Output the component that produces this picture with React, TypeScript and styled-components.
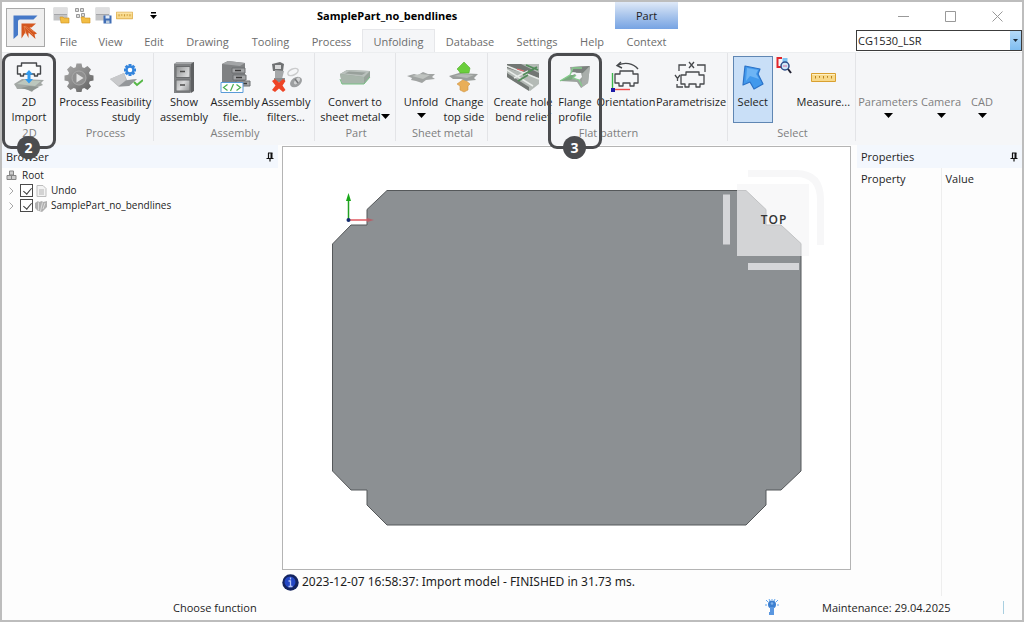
import React from "react";
import styled, { createGlobalStyle, css } from "styled-components";

const GlobalStyle = createGlobalStyle`
  * { box-sizing: border-box; }
  body {
    margin: 0;
    background: #fdfdfd;
    color: #1e1e1e;
    font: 11px/15px "Open Sans", "Noto Sans", sans-serif;
  }
  button, select, input { font: inherit; color: inherit; margin: 0; }
`;

const Frame = styled.div`
  min-height: 100vh;
  display: flex;
  flex-direction: column;
  border: 2px solid #bdbdbd;
  background: #fdfdfd;
`;

/* ---------- header ---------- */

const Header = styled.header`
  display: flex;
  background: #fff;
`;

const LogoButton = styled.button`
  width: 39px;
  height: 39px;
  margin: 6px 4px 5px;
  padding: 0;
  border: 1px solid #a9a9a9;
  background: #efefef;
  display: flex;
  align-items: center;
  justify-content: center;
`;

const HeaderMain = styled.div`
  display: flex;
  flex-direction: column;
`;

const TitleRow = styled.div`
  height: 27px;
  display: flex;
  align-items: center;
`;

const QuickAccess = styled.div`
  display: flex;
  gap: 4px;
  width: 268px;
  padding-left: 4px;
`;

const QuickButton = styled.button`
  width: 17px;
  height: 18px;
  padding: 0;
  border: 0;
  background: none;
  display: flex;
  align-items: center;
  justify-content: center;
`;

const QuickMenu = styled(QuickButton)`
  margin-left: 8px;
`;

const Title = styled.h1`
  flex: 1;
  margin: 0;
  font-size: 11px;
  line-height: 15px;
  font-weight: 700;
  color: #000;
`;

const ContextTab = styled.div`
  width: 63px;
  align-self: stretch;
  display: flex;
  align-items: center;
  justify-content: center;
  background: linear-gradient(#dfe9f8, #a9c5ec 50%, #76a3e3);
`;

const Tabs = styled.nav`
  height: 23px;
  display: flex;
`;

const Tab = styled.button<{ $w: number; $active?: boolean }>`
  width: ${(p) => p.$w}px;
  padding: 0;
  border: 1px solid ${(p) => (p.$active ? "#e6e7ea" : "transparent")};
  border-bottom: 0;
  background: ${(p) => (p.$active ? "#f5f6f8" : "none")};
  color: #6c6c6c;
  white-space: nowrap;
`;

const HeaderSide = styled.div`
  flex: 1;
  display: flex;
  flex-direction: column;
  align-items: flex-end;
`;

const WindowControls = styled.div`
  display: flex;
  height: 28px;
  padding-right: 1px;
`;

const WindowButton = styled.button`
  width: 47px;
  padding: 0;
  border: 0;
  background: none;
  display: flex;
  align-items: center;
  justify-content: center;
`;

const MachineBox = styled.div`
  position: relative;
  width: 166px;
  height: 21px;
`;

const MachineSelect = styled.select`
  appearance: none;
  width: 100%;
  height: 100%;
  padding: 0 14px 0 1px;
  border: 1px solid #3c3c3c;
  border-radius: 0;
  background: #fff;
`;

const MachineArrow = styled.span`
  position: absolute;
  top: 1px;
  right: 1px;
  bottom: 1px;
  width: 11px;
  display: flex;
  align-items: center;
  justify-content: center;
  background: linear-gradient(#b5daf7, #7fbdf0);
  pointer-events: none;
`;

/* ---------- ribbon ---------- */

const Ribbon = styled.div`
  height: 93px;
  display: flex;
  background: #f5f6f8;
  border-top: 1px solid #eceef0;
`;

const GroupBox = styled.section<{ $w?: number }>`
  ${(p) => (p.$w ? css`width: ${p.$w}px;` : css`flex: 1;`)}
  height: 88px;
  padding: 3px 0 0 2px;
  display: flex;
  flex-direction: column;
  border-right: 1px solid ${(p) => (p.$w && p.$w > 54 ? "#e3e4e7" : "transparent")};
`;

const GroupButtons = styled.div`
  height: 68px;
  display: flex;
  align-items: flex-start;
`;

const GroupLabel = styled.div`
  margin-top: 1px;
  text-align: center;
  color: #7e7e7e;
`;

const ButtonHolder = styled.div<{ $w: number }>`
  position: relative;
  width: ${(p) => p.$w}px;
  display: flex;
  justify-content: center;
`;

const ToolButton = styled.button<{ $selected?: boolean; $dim?: boolean }>`
  width: ${(p) => (p.$selected ? "40px" : "100%")};
  height: 67px;
  padding: 3px 0 0;
  border: 1px solid ${(p) => (p.$selected ? "#5f86b3" : "transparent")};
  background: ${(p) => (p.$selected ? "#c9dff7" : "none")};
  color: ${(p) => (p.$dim ? "#7e7e7e" : "#1e1e1e")};
  display: flex;
  flex-direction: column;
  align-items: center;
  text-align: center;
  white-space: pre;
`;

const IconSlot = styled.span`
  flex: none;
  height: 34px;
  display: flex;
  align-items: center;
`;

const MiniButton = styled.button`
  width: 16px;
  height: 20px;
  padding: 0;
  border: 0;
  background: none;
`;

const LabelLine = styled.span`
  display: flex;
  align-items: center;
`;

const Highlight = styled.span`
  position: absolute;
  z-index: 2;
  top: -3px;
  left: calc(50% - 27px);
  width: 54px;
  height: 96px;
  border: 3px solid #4b4c4f;
  border-radius: 9px;
  pointer-events: none;
`;

const Badge = styled.span`
  position: absolute;
  left: 12px;
  bottom: -13px;
  width: 23px;
  height: 23px;
  border-radius: 50%;
  background: #4b4c4f;
  color: #fff;
  font-size: 14px;
  font-weight: 700;
  line-height: 23px;
  text-align: center;
`;

/* ---------- body ---------- */

const Body = styled.div`
  flex: 1;
  display: flex;
`;

const BrowserPanel = styled.aside`
  width: 280px;
  padding-right: 4px;
`;

const PanelHeader = styled.div`
  height: 23px;
  padding: 0 4px;
  display: flex;
  align-items: center;
  justify-content: space-between;
  background: #f3f7fd;
`;

const PinButton = styled.button`
  width: 8px;
  height: 10px;
  padding: 0;
  border: 0;
  background: none;
  display: flex;
`;

const Tree = styled.ul`
  margin: 0;
  padding: 0 0 0 4px;
  list-style: none;
  font-size: 10px;
`;

const TreeRow = styled.li`
  height: 15px;
  display: flex;
  align-items: center;
`;

const RootName = styled.span`
  margin-left: 5px;
`;

const TreeLabel = styled.label`
  display: flex;
  align-items: center;
  gap: 1px;
`;

const TreeIcon = styled.span`
  width: 14px;
  display: flex;
  justify-content: center;
`;

const TreeName = styled.span`
  margin-left: 2px;
`;

const Expander = styled.button`
  width: 14px;
  height: 13px;
  padding: 0 0 0 3px;
  border: 0;
  background: none;
  display: flex;
  align-items: center;
`;

const Check = styled.input`
  appearance: none;
  position: relative;
  width: 13px;
  height: 13px;
  border: 1px solid #4a4a4a;
  background: #fff;
  &:checked::after {
    content: "";
    position: absolute;
    left: 4px;
    top: 1px;
    width: 4px;
    height: 7px;
    border: solid #3a3a3a;
    border-width: 0 1px 1px 0;
    transform: rotate(40deg);
  }
`;

const Center = styled.main`
  flex: 1;
  min-width: 0;
  padding-top: 1px;
  display: flex;
  flex-direction: column;
`;

const Viewport = styled.div`
  flex: 1;
  min-height: 0;
  display: flex;
  border: 1px solid #b4b4b4;
  background: #fff;
  svg { flex: 1; min-width: 0; }
`;

const LogLine = styled.div`
  height: 26px;
  padding-bottom: 2px;
  display: flex;
  align-items: center;
  gap: 3px;
  font: 12px/16px "Noto Sans", sans-serif;
`;

const PropertiesPanel = styled.aside`
  width: 171px;
  padding-left: 6px;
  display: flex;
  flex-direction: column;
`;

const PropertyTable = styled.table`
  flex: 1;
  width: 100%;
  height: 100%;
  border-collapse: collapse;
  th {
    height: 20px;
    padding: 0 0 0 4px;
    font-weight: 400;
    text-align: left;
  }
  td { padding: 0; }
  th:first-child { width: 84px; }
  th:first-child, td:first-child { border-right: 1px solid #eeeeee; }
`;

const StatusBar = styled.footer`
  height: 24px;
  padding: 0 18px 2px 171px;
  display: flex;
  align-items: center;
`;

const StatusHint = styled.span`
  flex: 1;
`;

const Maintenance = styled.span`
  width: 181px;
  margin-left: 43px;
`;

const StatusTick = styled.span`
  width: 1px;
  height: 13px;
  background: #a9cfe0;
`;

/* ---------- icons ---------- */

const Caret = () => (
  <svg width="9" height="5" viewBox="0 0 9 5"><path d="M0 0h9L4.5 5z" fill="#000" /></svg>
);

const Pin = () => (
  <svg width="8" height="10" viewBox="0 0 8 10">
    <path d="M2.500 1v5M2 1h4.500M.5 6.500h7M4 6.500v3" stroke="#111" strokeWidth="1.200" fill="none" />
    <path d="M4.500 1h2v5.400h-2z" fill="#111" />
  </svg>
);

const Logo = () => (
  <svg width="25" height="25" viewBox="0 0 25 25">
    <path d="M.5.5h24l-4 4H7Q5 4.500 5 6.500V20l-4.500 4z" fill="#4679c8" />
    <path d="M8.500 8.500H23l-4.500 4h-2l7.500 6-2.500 1 1 4.500-7-6.500v5.500l-3.500-7V18l-3.500 5.500z" fill="#d4571f" />
    <path d="M11 11l9 9M11 11l2 8M12 11l9 6" stroke="#e98a55" strokeWidth=".7" fill="none" />
  </svg>
);

const FolderBits = () => (
  <path d="M7 10h3l1 1h5v5H8z" fill="#f2bd44" stroke="#cf9220" strokeWidth=".6" />
);

const OpenIcon = () => (
  <svg width="17" height="17" viewBox="0 0 17 17">
    <path d="M.5.5h14v13H.5z" fill="#c3c4c6" /><path d="M1 1h13v6H1z" fill="#dededf" />
    <path d="M1 7.500h13" stroke="#a5a6a9" /><FolderBits />
  </svg>
);

const ImportAsmIcon = () => (
  <svg width="17" height="17" viewBox="0 0 17 17">
    <path d="M1.500 1.500h3v3h-3zM6.500 1.500h3v3h-3zM2.500 7.500h3v3h-3zM7.500 6.500h3v3h-3z" fill="#ddd" stroke="#9a9a9a" /><FolderBits />
  </svg>
);

const SaveIcon = () => (
  <svg width="17" height="17" viewBox="0 0 17 17">
    <path d="M.5.5h14v13H.5z" fill="#c3c4c6" /><path d="M1 1h13v6H1z" fill="#dededf" />
    <path d="M1 7.500h13" stroke="#a5a6a9" />
    <path d="M8.500 8.500h8v8h-8z" fill="#3f6db5" /><path d="M10.500 8.500h4v3h-4z" fill="#dfe9f6" /><path d="M11 13.500h3.500v3H11z" fill="#bcd" />
  </svg>
);

const Ruler = ({ w, h }: { w: number; h: number }) => (
  <svg width={w} height={h} viewBox="0 0 25 11" preserveAspectRatio="none">
    <path d="M.5 1.500h24v8H.5z" fill="#f8d98a" stroke="#d9a030" />
    <path d="M1 2.500h23" stroke="#fdf0c4" />
    <path d="M4.500 4v2.500M8.500 4v1.800M12.500 4v2.500M16.500 4v1.800M20.500 4v2.500" stroke="#b98420" />
  </svg>
);

const Import2DIcon = () => (
  <svg width="32" height="34" viewBox="0 0 32 34">
    <path d="M1 24l8-5 22 1-3 3 2 2-8 3-3 4-6-3-9 0-1-2z" fill="#a3a8a5" />
    <path d="M4 24l7-4 17 1-6 5z" fill="#bcc7be" /><path d="M8 28l8-2 10 1-7 4z" fill="#8d9490" />
    <path d="M4.500 6h4V3h15v3h4v8h-3v2h-3v-2h-11v2h-3v-2h-3z" fill="#fafbfb" stroke="#45484b" strokeWidth="1.400" strokeLinejoin="round" />
    <path d="M16 10l4 4.500h-2.500V19H20l-4 4.500-4-4.500h2.500v-4.500H12z" fill="#2f9bf0" />
  </svg>
);

const gearTeeth = [0, 45, 90, 135, 180, 225, 270, 315];

const ProcessIcon = () => (
  <svg width="30" height="32" viewBox="0 0 30 32">
    <defs>
      <linearGradient id="gear" x1="0" y1="0" x2="1" y2="1">
        <stop offset="0" stopColor="#a9a9a9" /><stop offset=".5" stopColor="#8a8a8a" /><stop offset="1" stopColor="#5c5c5c" />
      </linearGradient>
    </defs>
    <path
      d="M12.500 2.500h5l.8 3.700 2 .9L23.500 5l3.500 3.500-2 3.200.8 2 3.700.8v5l-3.700.8-.8 2 2 3.200-3.500 3.500-3.200-2-2 .8-.8 3.200h-5l-.8-3.200-2-.8-3.200 2L3 25.500l2-3.200-.8-2-3.700-.8v-5l3.700-.8.8-2-2-3.200L6.500 5l3.200 2.100 2-.9z"
      fill="url(#gear)"
    />
    <circle cx="15" cy="17" r="7" fill="#8f8f8f" stroke="#a8a8a8" />
    <path d="M12.500 12.500l7 4.500-7 4.500z" fill="#e4e4e4" />
  </svg>
);

const FeasibilityIcon = () => (
  <svg width="34" height="32" viewBox="0 0 34 32">
    <path d="M1 18l14-6 3 7 10-1-8 7-10 1z" fill="#b3b5b7" />
    <path d="M1 18l14-6 2 7-7 6z" fill="#c8c9cb" /><path d="M10 25l7-5.500 11-1.500-8 7z" fill="#94979a" />
    <g fill="#3485dd">
      {gearTeeth.map((a) => (
        <path key={a} d="M19.500 3h3v3h-3z" transform={`rotate(${a} 21 9)`} />
      ))}
    </g>
    <circle cx="21" cy="9" r="3.400" fill="#fff" stroke="#3485dd" strokeWidth="2.200" />
    <path d="M25 21l3 3 6-5" fill="none" stroke="#56b847" strokeWidth="2" />
  </svg>
);

const CabinetIcon = () => (
  <svg width="24" height="32" viewBox="0 0 24 32">
    <defs>
      <linearGradient id="drawer" x1="0" y1="0" x2="1" y2="1">
        <stop offset="0" stopColor="#8f9192" /><stop offset=".6" stopColor="#d9dadb" /><stop offset="1" stopColor="#909293" />
      </linearGradient>
    </defs>
    <path d="M2 3l3-2h17l-1 29-3 2H2z" fill="#808284" />
    <path d="M2 3l3-2h17l-3 2z" fill="#a5a7a9" /><path d="M19 3l3-2v29l-3 2z" fill="#5e6062" />
    <path d="M4 5.500h14v11H4zM4 19h14v11H4z" fill="url(#drawer)" stroke="#6a6c6e" />
    <path d="M8 10.500h5M8 24h5" stroke="#4c4c4c" strokeWidth="1.600" />
  </svg>
);

const AsmFileIcon = () => (
  <svg width="34" height="34" viewBox="0 0 34 34">
    <path d="M4 4l6-3 17 2v20H4z" fill="#7f8183" /><path d="M4 4l6-3 17 2-5 3z" fill="#a3a5a7" />
    <path d="M14 8h13v5H14zM15 15h13v5H15zM18 21h14v5H18z" fill="#a3a5a7" stroke="#6c6e70" />
    <path d="M17 10.500h6M18 17.500h6M24 23.500h5" stroke="#3a3a3a" strokeWidth="1.500" />
    <path d="M3 22.500h22v10H3z" fill="#fff" stroke="#5a9bd8" />
    <path d="M9.500 24.500l-4 3 4 3M18.500 24.500l4 3-4 3M15.500 24l-3 7" stroke="#4caf50" fill="none" strokeWidth="1.200" />
  </svg>
);

const FiltersIcon = () => (
  <svg width="32" height="34" viewBox="0 0 32 34">
    <path d="M2 4l8-2 4 2-1 7H3z" fill="#707274" /><path d="M5 10l9 1-2 8H5z" fill="#a5a8aa" /><path d="M5 5h6v4H5z" fill="#d9dadb" />
    <path d="M4 18h11v4H4z" fill="#8a8c8e" />
    <ellipse cx="23" cy="12" rx="5.500" ry="3" fill="none" stroke="#cbcccd" strokeWidth="1.500" transform="rotate(-25 23 12)" />
    <ellipse cx="26" cy="22" rx="6.500" ry="4.500" fill="#9d9fa1" transform="rotate(-35 26 22)" />
    <ellipse cx="27" cy="21" rx="4" ry="2" fill="#d2d3d4" transform="rotate(-50 27 21)" />
    <path d="M25 19l3 4" stroke="#77797b" strokeWidth="1.500" />
    <path d="M2 21l3-2 4 3.500 4-3.500 2.500 2-3 4.500 3 4.500-2.500 2-4-3.500-4 3.500-3-2 3.500-4.500z" fill="#ee4526" />
  </svg>
);

const ConvertIcon = () => (
  <svg width="32" height="18" viewBox="0 0 32 18">
    <path d="M1 6l7-4 23 1v6l-6 7H3z" fill="#97a39a" />
    <path d="M1 6l7-4 23 1-6 6z" fill="#b9c0bc" /><path d="M6 5.500l4-2 17 1-4 2.500z" fill="#98a09b" />
    <path d="M1 6l24 3v7H3z" fill="#a8b5ab" /><path d="M1 11l2 5h22l6-7" stroke="#7ac086" fill="none" />
  </svg>
);

const UnfoldIcon = () => (
  <svg width="30" height="20" viewBox="0 0 30 20">
    <path d="M1 9l7-2 4 1 5-3 5 2 7 0-3 3 3 2-9 1-4 3-6-2-5-1 1-2z" fill="#a1a4a3" />
    <path d="M6 9l8-2 10 1-7 4z" fill="#bfc3c0" />
  </svg>
);

const ChangeTopIcon = () => (
  <svg width="32" height="32" viewBox="0 0 32 32">
    <path d="M16 18l6 5-2 2v4l-4 2-4-2v-4l-3-2z" fill="#e9ae58" stroke="#cf9644" strokeWidth=".6" />
    <path d="M1 15l10-3 19 1-4 4 2 2-10 1-5-2-8 0z" fill="#9a9e9c" />
    <path d="M6 15l7-2 13 1-7 3z" fill="#b5bab6" />
    <path d="M16 1l6 6-1 5h-9l-1-2-2-2z" fill="#6ace3c" stroke="#50ad2c" strokeWidth=".6" strokeLinejoin="round" />
  </svg>
);

const ReliefIcon = () => (
  <svg width="34" height="30" viewBox="0 0 34 30">
    <path d="M1 2h32v20l-9 7L1 15z" fill="#b4bab6" />
    <path d="M1 2h14l18 9v5L1 6zM1 11l22 14v4L1 15z" fill="#727774" />
    <path d="M1 4l32 13M1 8l26 16M8 16l14-7" stroke="#e8ece9" strokeWidth="1.500" fill="none" />
    <path d="M17 13l14-8M20 3l12 5M12 19l10-6" stroke="#528c5a" strokeWidth="1.800" fill="none" />
    <path d="M11 7l7 2" stroke="#e5686b" strokeWidth="1.300" />
  </svg>
);

const FlangeIcon = () => (
  <svg width="32" height="26" viewBox="0 0 32 26">
    <path d="M11 3l20-1-2 17-7 5-4-6-17-1 10-6h3l7-6-9 4z" fill="#9da39f" />
    <path d="M14 3l17-1-7 7-11-1z" fill="#7b817e" />
    <path d="M24 9l7-7-2 17-7 5z" fill="#a9aeab" /><path d="M1 17l10-6h6l-5 5z" fill="#7aa97f" />
    <path d="M14 9l8 0 1 4-3 3-6-2 3-3z" fill="#f5f6f8" />
    <path d="M1 17l10-6 3-7h9M17 11l-3 3 6 2 3 6" stroke="#86cd8d" fill="none" strokeWidth="1.300" />
  </svg>
);

const profile = "M5 14h5v-3h13v3h5v9h-4v3h-4v-3h-7v3H9v-3H5z";

const OrientationIcon = () => (
  <svg width="32" height="34" viewBox="0 0 32 34">
    <path d={profile} fill="none" stroke="#45484b" strokeWidth="1.300" strokeLinejoin="round" />
    <path d="M28 9C23 3 15 2 8 5M11 2L7 5.500l5 2.500" fill="none" stroke="#45484b" strokeWidth="1.400" />
    <path d="M2.500 13v16" stroke="#39b54a" strokeWidth="1.400" /><path d="M3 29.500h17" stroke="#f04a4a" strokeWidth="1.400" />
    <path d="M1 28h4v4H1z" fill="#1c1ca8" />
  </svg>
);

const ParamIcon = () => (
  <svg width="34" height="34" viewBox="0 0 34 34">
    <path d={profile} transform="translate(2 1)" fill="none" stroke="#45484b" strokeWidth="1.300" strokeLinejoin="round" />
    <path d="M5 11V5h7M31 12V5h-8M15 2l5 6M20 2l-5 6M1 15l2.500 3.500L6 15M3.500 18.500V21M3 24v3h6" fill="none" stroke="#45484b" strokeWidth="1.300" />
  </svg>
);

const SelectIcon = () => (
  <svg width="26" height="28" viewBox="0 0 26 28">
    <path d="M5 3l15 3-2 5 5 10-9 5-4-7-7 3z" fill="#4299ec" stroke="#2a72c8" strokeWidth="1.200" strokeLinejoin="round" />
    <path d="M7 5l11 2-2 4 3 5-9-3-4 5z" fill="#6db4f5" />
  </svg>
);

const SelectZoomIcon = () => (
  <svg width="16" height="18" viewBox="0 0 16 18">
    <path d="M6.500 2h5v8h-5z" fill="#7fc3f2" />
    <path d="M5 2H1.500v9H5" fill="none" stroke="#e0262c" strokeWidth="2" /><path d="M4 2h2" stroke="#e0262c" strokeWidth="2" />
    <circle cx="9" cy="10" r="4" fill="#cfe7f7" stroke="#2d4d8b" strokeWidth="1.500" /><path d="M7 10h4" stroke="#d66b9b" />
    <path d="M12 13l3 4" stroke="#223" strokeWidth="2" />
  </svg>
);

const RootIcon = () => (
  <svg width="11" height="11" viewBox="0 0 11 11">
    <path d="M3.500 1h4v4h-4zM1 5.500h4.500v4H1zM5.500 5.500H10v4H5.500z" fill="#ccc" stroke="#858585" />
  </svg>
);

const UndoDocIcon = () => (
  <svg width="11" height="12" viewBox="0 0 11 12">
    <path d="M1 .5h6l3 3v8H1z" fill="#f3f3f3" stroke="#bdbdbd" /><path d="M3 5h5M3 7h5M3 9h5" stroke="#b3b3b3" />
  </svg>
);

const PartIcon = () => (
  <svg width="13" height="12" viewBox="0 0 13 12">
    <path d="M0 3l3-2 1 1 3-1 1 1 4-1v6l-5 5-3-1H3L0 8z" fill="#b0b0b0" />
    <path d="M3.500 2.500v8M7.500 2.500L5.500 11M10 3L8 9" stroke="#dedede" fill="none" />
  </svg>
);

const InfoIcon = () => (
  <svg width="17" height="17" viewBox="0 0 17 17">
    <circle cx="8.500" cy="8.500" r="8.200" fill="#14245f" /><circle cx="8" cy="8" r="5.500" fill="#2447c4" />
    <path d="M8.500 3.500v2M6.500 7h2v5M6.500 12.500h4" stroke="#b4c4f5" strokeWidth="1.300" fill="none" />
  </svg>
);

const KeyIcon = () => (
  <svg width="14" height="17" viewBox="0 0 14 17">
    <circle cx="7" cy="5.500" r="4" fill="#3c7fd0" /><circle cx="7" cy="4.500" r="1.300" fill="#7fb2ea" />
    <path d="M5 8h4v8H4v-3h1z" fill="#5a97e0" />
    <path d="M1 1l2 2M13 1l-2 2M0 6h2M12 6h2M7 0v1M4 0l1 2M10 0L9 2" stroke="#62a6ee" />
  </svg>
);

const ModelView = () => (
  <svg viewBox="283 147 567 422" role="img" aria-label="Sheet metal part, top view">
    <path
      d="M387 190.500H746L766 209.500V225H781L801 243.500V471L781 490H766V505L746 525H387L367 505V490H351L332.500 471V244L351 225H367V209.500Z"
      fill="#8c9093" stroke="#55585a"
    />
    <path d="M348.500 220V200" stroke="#22a022" strokeWidth="1.500" />
    <path d="M348.500 193l-2.500 8h5z" fill="#18a818" />
    <path d="M348.500 220H369" stroke="#e0585f" strokeWidth="1.500" />
    <path d="M367 218l7 2-7 2z" fill="#b5626a" />
    <circle cx="348.500" cy="220" r="2" fill="#142c6e" />
    <path d="M748 173.500H796Q820.500 173.500 820.500 200V245" fill="none" stroke="#f7f7f8" strokeWidth="7" />
    <path d="M737 184h72v72h-72z" fill="#f5f5f6" fillOpacity=".68" />
    <path d="M723 194.500h7v50h-7zM748 263h51v7h-51z" fill="#d5d6d9" />
    <text x="774" y="224" textAnchor="middle" fontFamily="Open Sans, sans-serif" fontSize="12" fontWeight="600" letterSpacing="1" fill="#333">TOP</text>
  </svg>
);

/* ---------- data ---------- */

const tabs: [string, number][] = [
  ["File", 39], ["View", 45], ["Edit", 42], ["Drawing", 65], ["Tooling", 61], ["Process", 61],
  ["Unfolding", 73], ["Database", 70], ["Settings", 64], ["Help", 46], ["Context", 63],
];

type Tool = {
  lines: string[];
  w: number;
  icon?: React.ReactNode;
  caret?: "below" | "inline";
  mark?: number;
  selected?: boolean;
  dim?: boolean;
  extra?: boolean;
};

const groups: { label?: string; w?: number; tools: Tool[] }[] = [
  { label: "2D", w: 54, tools: [{ lines: ["2D", "Import"], w: 50, icon: <Import2DIcon />, mark: 2 }] },
  {
    label: "Process", w: 98,
    tools: [
      { lines: ["Process"], w: 42, icon: <ProcessIcon /> },
      { lines: ["Feasibility", "study"], w: 52, icon: <FeasibilityIcon /> },
    ],
  },
  {
    label: "Assembly", w: 161,
    tools: [
      { lines: ["Show", "assembly"], w: 56, icon: <CabinetIcon /> },
      { lines: ["Assembly", "file..."], w: 46, icon: <AsmFileIcon /> },
      { lines: ["Assembly", "filters..."], w: 56, icon: <FiltersIcon /> },
    ],
  },
  { label: "Part", w: 81, tools: [{ lines: ["Convert to", "sheet metal"], w: 76, icon: <ConvertIcon />, caret: "inline" }] },
  {
    label: "Sheet metal", w: 92,
    tools: [
      { lines: ["Unfold"], w: 46, icon: <UnfoldIcon />, caret: "below" },
      { lines: ["Change", "top side"], w: 40, icon: <ChangeTopIcon /> },
    ],
  },
  {
    label: "Flat pattern", w: 240,
    tools: [
      { lines: ["Create hole", "bend relief"], w: 66, icon: <ReliefIcon /> },
      { lines: ["Flange", "profile"], w: 38, icon: <FlangeIcon />, mark: 3 },
      { lines: ["Orientation"], w: 64, icon: <OrientationIcon /> },
      { lines: ["Parametrisize"], w: 66, icon: <ParamIcon /> },
    ],
  },
  {
    label: "Select", w: 128,
    tools: [
      { lines: ["Select"], w: 46, icon: <SelectIcon />, selected: true, extra: true },
      { lines: ["Measure..."], w: 64, icon: <Ruler w={25} h={11} /> },
    ],
  },
  {
    tools: [
      { lines: ["Parameters"], w: 60, caret: "below", dim: true },
      { lines: ["Camera"], w: 46, caret: "below", dim: true },
      { lines: ["CAD"], w: 36, caret: "below", dim: true },
    ],
  },
];

const CaretLine = styled(LabelLine)`
  height: 14px;
`;

const RibbonTool = ({ tool }: { tool: Tool }) => (
  <>
    <ButtonHolder $w={tool.w}>
      <ToolButton $selected={tool.selected} $dim={tool.dim}>
        <IconSlot>{tool.icon}</IconSlot>
        {tool.lines.map((line, i) => (
          <LabelLine key={line}>
            {line}
            {tool.caret === "inline" && i === 1 && <Caret />}
          </LabelLine>
        ))}
        {tool.caret === "below" && <CaretLine><Caret /></CaretLine>}
      </ToolButton>
      {tool.mark && <Highlight><Badge>{tool.mark}</Badge></Highlight>}
    </ButtonHolder>
    {tool.extra && <MiniButton aria-label="Zoom to selection"><SelectZoomIcon /></MiniButton>}
  </>
);

export default function App() {
  return (
    <Frame>
      <GlobalStyle />
      <Header>
        <LogoButton aria-label="Application menu"><Logo /></LogoButton>
        <HeaderMain>
          <TitleRow>
            <QuickAccess>
              <QuickButton aria-label="Open"><OpenIcon /></QuickButton>
              <QuickButton aria-label="Open assembly"><ImportAsmIcon /></QuickButton>
              <QuickButton aria-label="Save"><SaveIcon /></QuickButton>
              <QuickButton aria-label="Measure"><Ruler w={17} h={9} /></QuickButton>
              <QuickMenu aria-label="Customize toolbar">
                <svg width="7" height="8" viewBox="0 0 7 8"><path d="M1 0h5v1.500H1zM0 3h7L3.500 7z" fill="#000" /></svg>
              </QuickMenu>
            </QuickAccess>
            <Title>SamplePart_no_bendlines</Title>
            <ContextTab>Part</ContextTab>
          </TitleRow>
          <Tabs>
            {tabs.map(([name, w]) => (
              <Tab key={name} $w={w} $active={name === "Unfolding"}>{name}</Tab>
            ))}
          </Tabs>
        </HeaderMain>
        <HeaderSide>
          <WindowControls>
            <WindowButton aria-label="Minimize">
              <svg width="11" height="11" viewBox="0 0 11 11"><path d="M0 5.500h11" stroke="#999" /></svg>
            </WindowButton>
            <WindowButton aria-label="Maximize">
              <svg width="11" height="11" viewBox="0 0 11 11"><path d="M.5.5h10v10H.5z" fill="none" stroke="#999" /></svg>
            </WindowButton>
            <WindowButton aria-label="Close">
              <svg width="11" height="11" viewBox="0 0 11 11"><path d="M.5.5l10 10M10.500.5l-10 10" stroke="#999" /></svg>
            </WindowButton>
          </WindowControls>
          <MachineBox>
            <MachineSelect aria-label="Machine" defaultValue="CG1530_LSR">
              <option>CG1530_LSR</option>
            </MachineSelect>
            <MachineArrow>
              <svg width="5" height="3" viewBox="0 0 5 3"><path d="M0 0h5L2.500 3z" fill="#1c2b3a" /></svg>
            </MachineArrow>
          </MachineBox>
        </HeaderSide>
      </Header>

      <Ribbon>
        {groups.map((g, i) => (
          <GroupBox key={i} $w={g.w}>
            <GroupButtons>
              {g.tools.map((t) => <RibbonTool key={t.lines.join()} tool={t} />)}
            </GroupButtons>
            {g.label && <GroupLabel>{g.label}</GroupLabel>}
          </GroupBox>
        ))}
      </Ribbon>

      <Body>
        <BrowserPanel>
          <PanelHeader>Browser<PinButton aria-label="Pin browser"><Pin /></PinButton></PanelHeader>
          <Tree>
            <TreeRow><RootIcon /><RootName>Root</RootName></TreeRow>
            {["Undo", "SamplePart_no_bendlines"].map((name, i) => (
              <TreeRow key={name}>
                <Expander aria-label={`Expand ${name}`}>
                  <svg width="5" height="8" viewBox="0 0 5 8"><path d="M.5.5L4 4 .5 7.500" fill="none" stroke="#a6a6a6" /></svg>
                </Expander>
                <TreeLabel>
                  <Check type="checkbox" defaultChecked />
                  <TreeIcon>{i === 0 ? <UndoDocIcon /> : <PartIcon />}</TreeIcon>
                  <TreeName>{name}</TreeName>
                </TreeLabel>
              </TreeRow>
            ))}
          </Tree>
        </BrowserPanel>
        <Center>
          <Viewport><ModelView /></Viewport>
          <LogLine><InfoIcon />2023-12-07 16:58:37: Import model - FINISHED in 31.73 ms.</LogLine>
        </Center>
        <PropertiesPanel>
          <PanelHeader>Properties<PinButton aria-label="Pin properties"><Pin /></PinButton></PanelHeader>
          <PropertyTable>
            <thead><tr><th scope="col">Property</th><th scope="col">Value</th></tr></thead>
            <tbody><tr><td /><td /></tr></tbody>
          </PropertyTable>
        </PropertiesPanel>
      </Body>

      <StatusBar>
        <StatusHint>Choose function</StatusHint>
        <KeyIcon />
        <Maintenance>Maintenance: 29.04.2025</Maintenance>
        <StatusTick />
      </StatusBar>
    </Frame>
  );
}
